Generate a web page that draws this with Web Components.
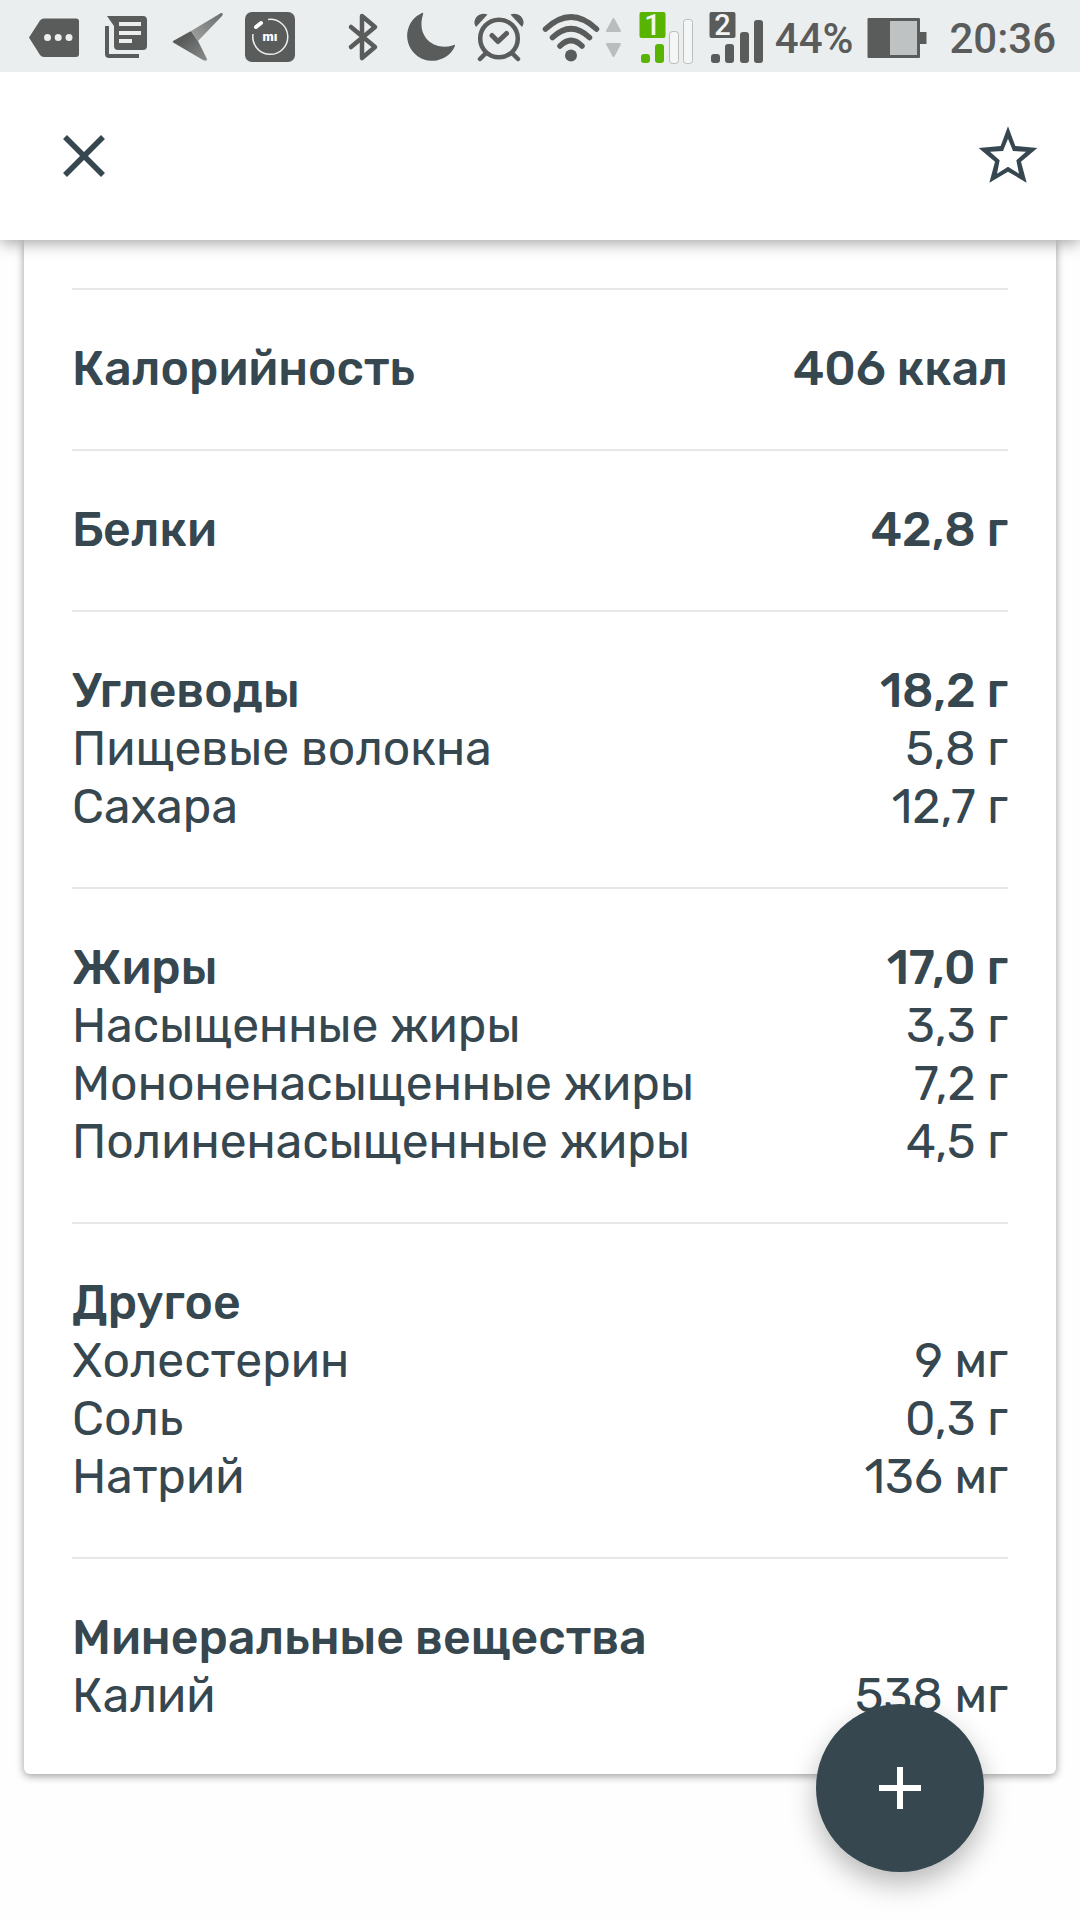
<!DOCTYPE html>
<html lang="ru">
<head>
<meta charset="utf-8">
<meta name="viewport" content="width=device-width, initial-scale=1">
<title>Пищевая ценность</title>
<style>
  body { margin: 0; background: #fefefe; color: #36474f; font-family: Rubik, Roboto, "Noto Sans", sans-serif; }
</style>
</head>
<body>
<food-screen></food-screen>

<template id="status-bar">
  <style>
    :host { display: flex; justify-content: space-between; position: relative; z-index: 1; height: 72px; padding: 0 24px 0 28px; background: #ebeeef; color: #5a5c5b; font: 500 42px/72px Roboto, sans-serif; }
    div { display: flex; align-items: center; gap: 22px; }
    .system { gap: 8px; }
    svg { display: block; height: 72px; flex: none; fill: #5a5c5b; }
    .line { fill: none; stroke: #5a5c5b; stroke-linecap: round; stroke-linejoin: round; }
    .digit { font: 500 29px Roboto, sans-serif; fill: #f4f6f6; text-anchor: middle; }
    span, time { padding-top: 6px; }
    time { margin-left: 12px; }
  </style>
  <div>
    <svg width="52" viewBox="28 0 52 72"><path d="M29 37.5 40 20.500Q41.500 18.500 44 18.500H76Q79 18.500 79 21.500V54Q79 57 76 57H44Q41.500 57 40 55Z"/><g fill="#ebeeef"><circle cx="47.500" cy="37.500" r="3.500"/><circle cx="58.200" cy="37.500" r="3.500"/><circle cx="69" cy="37.500" r="3.500"/></g></svg>
    <svg width="48" viewBox="102 0 48 72"><path d="M107 16H143Q147 16 147 20V46Q147 50 143 50H118Q114 50 114 46V26ZM105 26H109V54H139V58H109Q105 58 105 54Z"/><path fill="#ebeeef" d="M119 22H141V26H119ZM119 31H141V35H119ZM119 39H132V43H119Z"/></svg>
    <svg width="51" viewBox="172 0 51 72"><defs><linearGradient id="wing" x1="0" y1="1" x2="1" y2="0"><stop stop-color="#a0a3a2"/><stop offset="1" stop-color="#6a6d6c"/></linearGradient><linearGradient id="tail" x1="0" y1="0" x2="1" y2="1"><stop offset=".3" stop-color="#5a5c5b"/><stop offset="1" stop-color="#8a8d8c"/></linearGradient></defs><path fill="url(#tail)" d="M173 41 191 31 198 41 207 59Q207 62 203 60L174 43Q172 42 173 41Z"/><path fill="url(#wing)" d="M191 31 221 13Q224 13 222 16L198 41Z"/></svg>
    <svg width="50" viewBox="245 0 50 72"><rect x="245" y="12" width="50" height="50" rx="7"/><path fill="none" stroke="#ebeeef" stroke-width="1.500" d="M268 19.500A17.500 17.500 0 1 1 253 34"/><path stroke="#fff" stroke-width="4" stroke-linecap="round" d="M256 27 261 23"/><text x="270" y="41" text-anchor="middle" font-size="13" font-weight="900" fill="#fff">mı</text></svg>
  </div>
  <div class="system">
    <svg width="49" viewBox="340 0 49 72"><path class="line" stroke-width="4.500" d="M349 27 373 47 360 58V16L373 27 349 47"/></svg>
    <svg width="61" viewBox="397 0 61 72"><path d="M420 13A25 25 0 1 0 453 46C453 44.500 452 44.500 450.500 45.500C432 51 414 37 421 14.500C421.500 13 421 12.500 420 13Z"/></svg>
    <svg width="61" viewBox="466 0 61 72"><path class="line" stroke-width="4.500" d="M483 54 478 59M511 54 516 59"/><circle class="line" stroke-width="4.500" cx="497" cy="38.500" r="18.800"/><path class="line" stroke-width="5" d="M490 35.500 496 41.500 504.500 33.500"/><path d="M474 27C469 20 477 11 485.500 14.500ZM520 27C525 20 517 11 508.500 14.500Z"/></svg>
    <svg width="94" viewBox="535 0 94 72"><g class="line" stroke-width="5.500"><path d="M543.500 29Q569 5 594.500 29"/><path d="M550.500 37.500Q569 20 587.500 37.500"/><path d="M558 46Q569 35 580 46"/></g><circle cx="569" cy="55.500" r="6"/><path fill="#babdbd" stroke="#babdbd" stroke-linejoin="round" stroke-width="2" d="M611.500 19 605 31H618ZM605 44H618L611.500 56Z"/></svg>
    <svg width="62" viewBox="637 0 62 72"><g fill="#58b400"><rect x="637.500" y="12" width="26" height="26" rx="2"/><rect x="639" y="54" width="9" height="9" rx="3"/><rect x="653" y="44" width="9" height="19" rx="3"/></g><g fill="#f4f6f6" stroke="#b9bcbc"><rect x="667.500" y="31.500" width="9" height="32" rx="3"/><rect x="681.500" y="19.500" width="9" height="44" rx="3"/></g><text class="digit" x="650.500" y="35">1</text></svg>
    <svg width="58" viewBox="707 0 58 72"><rect x="707.500" y="12" width="26" height="26" rx="2"/><rect x="709" y="54" width="9" height="9" rx="3"/><rect x="723" y="44" width="9" height="19" rx="3"/><rect x="738" y="32" width="9" height="31" rx="3"/><rect x="752" y="20" width="9" height="43" rx="3"/><text class="digit" x="720.500" y="35">2</text></svg>
    <span>44%</span>
    <svg width="68" viewBox="860 0 68 72"><rect x="866.500" y="18" width="52.500" height="40" rx="1"/><path fill="#bec2c2" d="M889 21H916V55H889Z"/><path d="M919 32H925.500V44H919Z"/></svg>
    <time>20:36</time>
  </div>
</template>

<template id="app-bar">
  <style>
    :host { display: flex; justify-content: space-between; align-items: center; height: 168px; padding: 0 36px 0 48px; background: #fff; box-sizing: border-box; box-shadow: 0 2px 16px rgba(0,0,0,.4); }
    button { width: 72px; height: 72px; padding: 0; border: 0; background: none; cursor: pointer; }
    svg { display: block; }
  </style>
  <button type="button" aria-label="Закрыть"><svg width="72" height="72" viewBox="0 0 72 72"><path stroke="#36474f" stroke-width="5.500" d="M17 17 55 55M55 17 17 55"/></svg></button>
  <button type="button" aria-label="В избранное"><svg width="72" height="72" viewBox="276 120 216 216"><path fill="#36474f" fill-rule="evenodd" d="M384 139 406 198 472 204 423 245 440 308 384 275 328 308 345 245 296 204 362 198ZM384 176 369 213 330 215 359 241 351 281 384 260 417 281 409 241 438 215 399 213Z"/></svg></button>
</template>

<template id="nutrition-card">
  <style>
    :host { display: block; margin: 0 24px; padding: 48px 48px 0; background: #fff; border-radius: 0 0 6px 6px; box-shadow: 0 2px 8px rgba(0,0,0,.4); }
  </style>
  <slot></slot>
</template>

<template id="nutrition-group">
  <style>
    :host { display: block; padding: 50px 0 49px; border-top: 2px solid #e7e7e7; }
    :host(:not(:last-of-type)) { padding-bottom: 51px; }
    table { width: 100%; border-collapse: collapse; font-size: 48px; line-height: 58px; }
    th, td { padding: 0; font-weight: 400; text-align: left; white-space: nowrap; }
    td { text-align: right; }
    tr:first-child > * { font-weight: 500; }
  </style>
  <table><tbody></tbody></table>
</template>

<template id="add-button">
  <style>
    :host { position: fixed; right: 96px; bottom: 48px; z-index: 2; }
    button { display: grid; place-items: center; width: 168px; height: 168px; padding: 0; border: 0; border-radius: 50%; background: #36474f; box-shadow: 0 12px 28px rgba(0,0,0,.28); cursor: pointer; }
  </style>
  <button type="button" aria-label="Добавить"><svg width="42" height="42" viewBox="0 0 42 42"><path fill="#fff" d="M18 0H24V18H42V24H24V42H18V24H0V18H18Z"/></svg></button>
</template>

<template id="food-screen">
  <style>
    :host { display: block; min-height: 100vh; }
    header { position: sticky; top: 0; z-index: 1; }
    main { display: block; padding-bottom: 146px; }
  </style>
  <header>
    <status-bar></status-bar>
    <app-bar></app-bar>
  </header>
  <main>
    <nutrition-card>
      <nutrition-group rows="Калорийность|406 ккал"></nutrition-group>
      <nutrition-group rows="Белки|42,8 г"></nutrition-group>
      <nutrition-group rows="Углеводы|18,2 г;Пищевые волокна|5,8 г;Сахара|12,7 г"></nutrition-group>
      <nutrition-group rows="Жиры|17,0 г;Насыщенные жиры|3,3 г;Мононенасыщенные жиры|7,2 г;Полиненасыщенные жиры|4,5 г"></nutrition-group>
      <nutrition-group rows="Другое|;Холестерин|9 мг;Соль|0,3 г;Натрий|136 мг"></nutrition-group>
      <nutrition-group rows="Минеральные вещества|;Калий|538 мг"></nutrition-group>
    </nutrition-card>
  </main>
  <add-button></add-button>
</template>

<script>
  class TemplateElement extends HTMLElement {
    constructor() {
      super();
      const template = document.getElementById(this.localName);
      this.attachShadow({ mode: 'open' }).append(document.importNode(template.content, true));
    }
  }

  class NutritionGroup extends TemplateElement {
    connectedCallback() {
      const body = this.shadowRoot.querySelector('tbody');
      body.replaceChildren();
      for (const row of this.getAttribute('rows').split(';')) {
        const [name, amount] = row.split('|');
        const tr = body.insertRow();
        const th = document.createElement('th');
        th.scope = 'row';
        th.textContent = name;
        tr.append(th);
        tr.insertCell().textContent = amount;
      }
    }
  }

  customElements.define('status-bar', class extends TemplateElement {});
  customElements.define('app-bar', class extends TemplateElement {});
  customElements.define('nutrition-group', NutritionGroup);
  customElements.define('nutrition-card', class extends TemplateElement {});
  customElements.define('add-button', class extends TemplateElement {});
  customElements.define('food-screen', class extends TemplateElement {});
</script>
</body>
</html>
